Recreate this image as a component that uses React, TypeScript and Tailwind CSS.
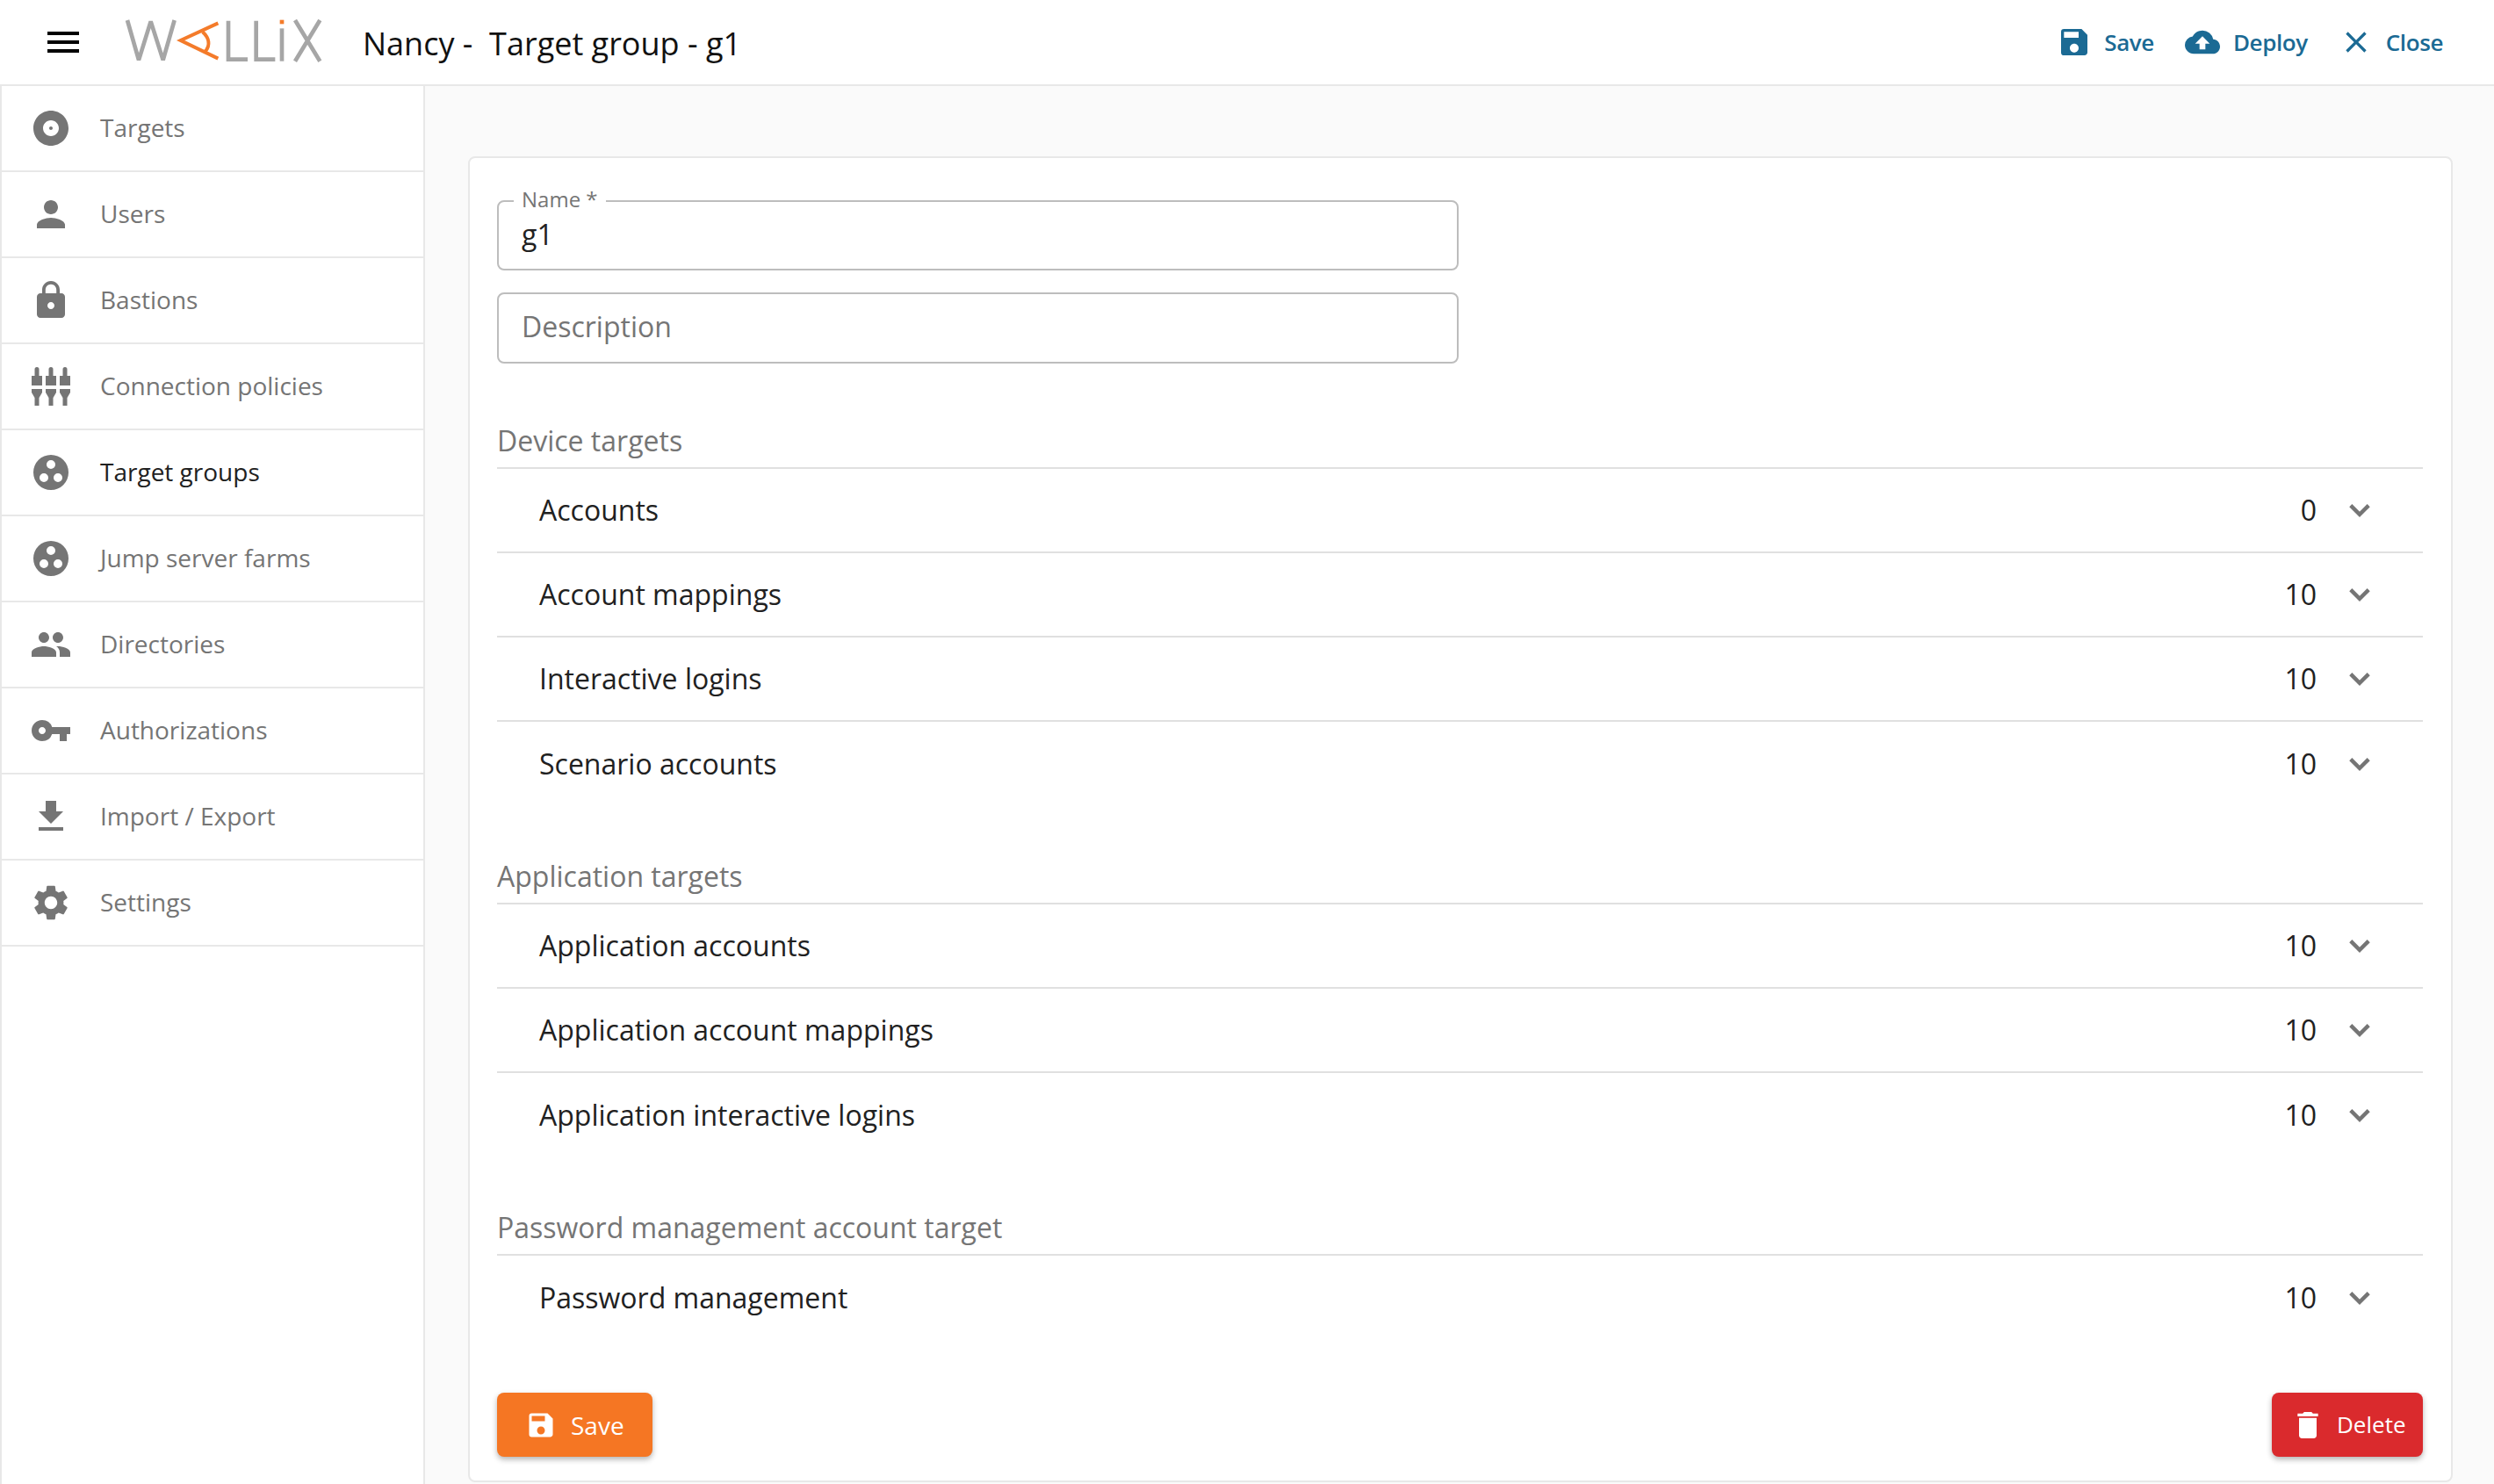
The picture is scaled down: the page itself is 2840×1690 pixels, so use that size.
import type { ComponentType, ReactNode } from 'react';
import {
  MdAlbum,
  MdClose,
  MdCloudUpload,
  MdDelete,
  MdFileDownload,
  MdLock,
  MdMenu,
  MdPeople,
  MdPerson,
  MdSave,
  MdSettings,
  MdVpnKey,
} from 'react-icons/md';

function GroupIcon() {
  return (
    <svg width="48" height="48" viewBox="0 0 24 24" fill="currentColor">
      <path
        fillRule="evenodd"
        d="M12 2a10 10 0 1 0 0 20 10 10 0 0 0 0-20ZM12 5a2.5 2.5 0 1 1 0 5 2.5 2.5 0 0 1 0-5ZM8 12.5a2.5 2.5 0 1 1 0 5 2.5 2.5 0 0 1 0-5ZM16 12.5a2.5 2.5 0 1 1 0 5 2.5 2.5 0 0 1 0-5Z"
      />
    </svg>
  );
}

function PlugsIcon() {
  return (
    <svg width="48" height="48" viewBox="-2 -2 48 48" fill="currentColor">
      {[6, 22, 38].map((cx) => (
        <g key={cx}>
          <path d={`M${cx - 2.5} 2.5a2.5 2.5 0 0 1 5 0v7.5h3.5v11h-12v-11h3.5Z`} />
          <path d={`M${cx - 6} 25h12v4l-3.5 6v9h-5v-9l-3.5-6Z`} />
        </g>
      ))}
    </svg>
  );
}

function Chevron() {
  return (
    <svg width="48" height="48" viewBox="0 0 24 24" fill="none" stroke="currentColor" strokeWidth="2.2">
      <path d="M6.9 9.3 12 14.4 17.1 9.3" />
    </svg>
  );
}

function Logo() {
  return (
    <svg width="230" height="60" viewBox="60 60 690 180" fill="none">
      <g stroke="#a6a6a6" strokeWidth="14">
        <path d="M75 72 114 208 155 76 197 208 236 72" strokeLinejoin="bevel" />
        <path d="M420 74V206H486" />
        <path d="M515 74V206H580" />
        <path d="M603 100V212" />
        <path d="M648 72 733 212M733 72 648 212" />
      </g>
      <g stroke="#f47b2a" strokeWidth="12">
        <path d="M385 82 257 141 385 203" />
        <path d="M332 112C356 134 358 158 342 178" />
      </g>
      <rect x="596" y="71" width="14" height="14" fill="#f47b2a" />
    </svg>
  );
}

const navItems: { label: string; icon: ReactNode; active?: boolean }[] = [
  { label: 'Targets', icon: <MdAlbum size={48} /> },
  { label: 'Users', icon: <MdPerson size={48} /> },
  { label: 'Bastions', icon: <MdLock size={48} /> },
  { label: 'Connection policies', icon: <PlugsIcon /> },
  { label: 'Target groups', icon: <GroupIcon />, active: true },
  { label: 'Jump server farms', icon: <GroupIcon /> },
  { label: 'Directories', icon: <MdPeople size={48} /> },
  { label: 'Authorizations', icon: <MdVpnKey size={48} /> },
  { label: 'Import / Export', icon: <MdFileDownload size={48} /> },
  { label: 'Settings', icon: <MdSettings size={48} /> },
];

const sections = [
  {
    title: 'Device targets',
    rows: [
      ['Accounts', '0'],
      ['Account mappings', '10'],
      ['Interactive logins', '10'],
      ['Scenario accounts', '10'],
    ],
  },
  {
    title: 'Application targets',
    rows: [
      ['Application accounts', '10'],
      ['Application account mappings', '10'],
      ['Application interactive logins', '10'],
    ],
  },
  {
    title: 'Password management account target',
    rows: [['Password management', '10']],
  },
];

function HeaderAction({
  icon: Icon,
  label,
  gap,
}: {
  icon: ComponentType<{ size?: number }>;
  label: string;
  gap: string;
}) {
  return (
    <button type="button" className={`flex items-center font-semibold text-[#1b6a94] ${gap}`}>
      <Icon size={40} />
      <span className="text-[26px] tracking-[-0.4px]">{label}</span>
    </button>
  );
}

function Section({ title, rows, first }: { title: string; rows: string[][]; first: boolean }) {
  return (
    <section className={first ? 'mt-[75px]' : 'mt-[67px]'}>
      <h2 className="h-[45px] border-b-2 border-[#e0e0e0] text-[32px] leading-[25px] text-[#757575]">
        {title}
      </h2>
      {rows.map(([name, count], index) => (
        <div
          key={name}
          className={`flex h-[96px] items-center pl-[48px] pr-[48px] text-[32px] text-[#212121] ${
            index < rows.length - 1 ? 'border-b-2 border-[#e0e0e0]' : ''
          }`}
        >
          <span className="flex-1">{name}</span>
          <span>{count}</span>
          <span className="ml-[25px] text-[#757575]">
            <Chevron />
          </span>
        </div>
      ))}
    </section>
  );
}

export default function App() {
  return (
    <div className="flex h-screen flex-col overflow-hidden bg-white font-['Open_Sans',sans-serif]">
      <header className="flex h-[98px] shrink-0 items-center border-b-2 border-[#e8e8e8] pl-[48px] pr-[58px]">
        <MdMenu size={48} className="text-black" />
        <div className="ml-[44px] pt-[2px]">
          <Logo />
        </div>
        <h1 className="ml-[43px] whitespace-pre pt-[3px] text-[36px] text-[#111111]">Nancy -  Target group - g1</h1>
        <div className="ml-auto flex items-center gap-[35px]">
          <HeaderAction icon={MdSave} label="Save" gap="gap-[14px]" />
          <HeaderAction icon={MdCloudUpload} label="Deploy" gap="gap-[15px]" />
          <HeaderAction icon={MdClose} label="Close" gap="gap-[14px]" />
        </div>
      </header>

      <div className="flex min-h-0 flex-1">
        <nav className="w-[484px] shrink-0 border-x-2 border-[#e8e8e8]">
          {navItems.map((item) => (
            <div key={item.label} className="flex h-[98px] items-center border-b-2 border-[#e8e8e8] pl-[32px]">
              <span className="flex w-[48px] justify-center text-[#757575]">{item.icon}</span>
              <span className={`ml-[32px] pb-[2px] text-[28px] ${item.active ? 'text-[#212121]' : 'text-[#757575]'}`}>
                {item.label}
              </span>
            </div>
          ))}
        </nav>

        <main className="min-w-0 flex-1 bg-[#fafafa] pb-[2px] pl-[49px] pr-[47px] pt-[80px]">
          <div className="h-full rounded-[8px] border-2 border-[#e8e8e8] bg-white pl-[31px] pr-[32px] pt-[48px]">
            <div className="relative h-[80px] w-[1095px] rounded-[8px] border-2 border-[#bdbdbd]">
              <label className="absolute -top-[21px] left-[17px] bg-white px-[9px] text-[24px] leading-[36px] text-[#757575]">
                Name *
              </label>
              <div className="pl-[26px] pt-[15px] text-[32px] leading-[44px] text-[#212121]">g1</div>
            </div>
            <div className="mt-[25px] flex h-[81px] w-[1095px] items-center rounded-[8px] border-2 border-[#bdbdbd] pb-[4px] pl-[26px] text-[32px] text-[#757575]">
              Description
            </div>

            {sections.map((section, index) => (
              <Section key={section.title} title={section.title} rows={section.rows} first={index === 0} />
            ))}

            <div className="mt-[60px] flex justify-between">
              <button
                type="button"
                className="flex h-[73px] w-[177px] items-center rounded-[8px] bg-[#f57623] pl-[32px] text-[28px] text-white shadow-[0_3px_6px_rgba(0,0,0,0.3)]"
              >
                <MdSave size={36} />
                <span className="ml-[16px]">Save</span>
              </button>
              <button
                type="button"
                className="flex h-[73px] w-[172px] items-center rounded-[8px] bg-[#da2a2d] pl-[21px] text-[26px] text-white shadow-[0_3px_6px_rgba(0,0,0,0.3)]"
              >
                <MdDelete size={40} />
                <span className="ml-[13px]">Delete</span>
              </button>
            </div>
          </div>
        </main>
      </div>
    </div>
  );
}
